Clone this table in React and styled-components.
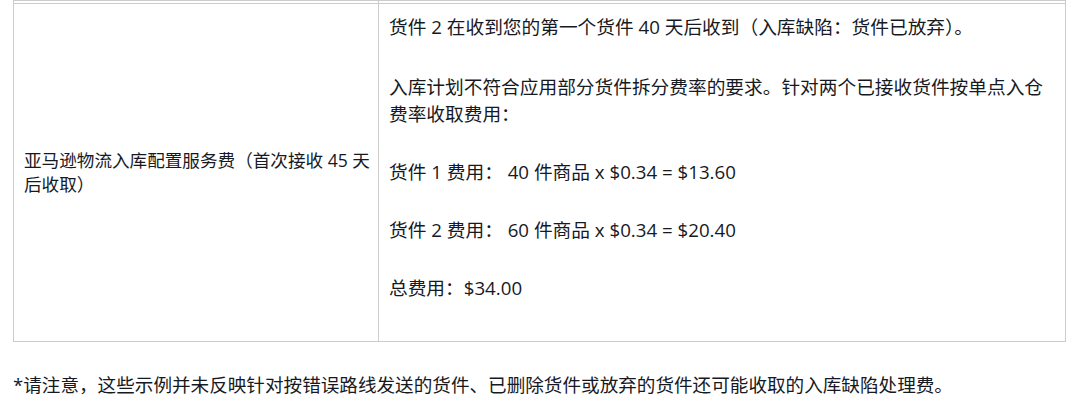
import styled, { createGlobalStyle } from "styled-components";

const GlobalStyle = createGlobalStyle`
  html, body {
    margin: 0;
    padding: 0;
    background: #ffffff;
  }
  body {
    font-family: "Open Sans", "Noto Sans CJK SC", "Noto Sans", sans-serif;
    color: #16191f;
  }
`;

const Page = styled.div`
  padding: 0 7px 0 13px;
`;

const FeeTable = styled.table`
  width: 1052px;
  border-collapse: collapse;
  table-layout: fixed;
`;

const Cell = styled.td`
  border: 1px solid #cccccc;
  vertical-align: ${(p) => (p.$middle ? "middle" : "top")};
  padding: ${(p) => (p.$stub ? "0" : p.$small ? "9px 4px 9px 10px" : "9px 10px")};
  height: ${(p) => (p.$stub ? "2px" : "auto")};
  font-size: ${(p) => (p.$small ? "17.6px" : "18.7px")};
  line-height: ${(p) => (p.$small ? "24px" : "27px")};
`;

const Para = styled.p`
  margin: 0 0 ${(p) => p.$gap || 31}px;
`;

const Note = styled.p`
  margin: 29px 0 0;
  font-size: 18.6px;
  line-height: 27px;
`;

export default function App() {
  return (
    <>
      <GlobalStyle />
      <Page>
        <FeeTable>
          <colgroup>
            <col style={{ width: "365px" }} />
            <col style={{ width: "687px" }} />
          </colgroup>
          <tbody>
            <tr>
              <Cell $stub />
              <Cell $stub />
            </tr>
            <tr>
              <Cell $middle $small>
                亚马逊物流入库配置服务费（首次接收 45 天后收取）
              </Cell>
              <Cell>
                <Para $gap={32.5}>货件 2 在收到您的第一个货件 40 天后收到（入库缺陷：货件已放弃）。</Para>
                <Para>入库计划不符合应用部分货件拆分费率的要求。针对两个已接收货件按单点入仓费率收取费用：</Para>
                <Para>货件 1 费用： 40 件商品 x $0.34 = $13.60</Para>
                <Para>货件 2 费用： 60 件商品 x $0.34 = $20.40</Para>
                <Para>总费用：$34.00</Para>
              </Cell>
            </tr>
          </tbody>
        </FeeTable>
        <Note>*请注意，这些示例并未反映针对按错误路线发送的货件、已删除货件或放弃的货件还可能收取的入库缺陷处理费。</Note>
      </Page>
    </>
  );
}
